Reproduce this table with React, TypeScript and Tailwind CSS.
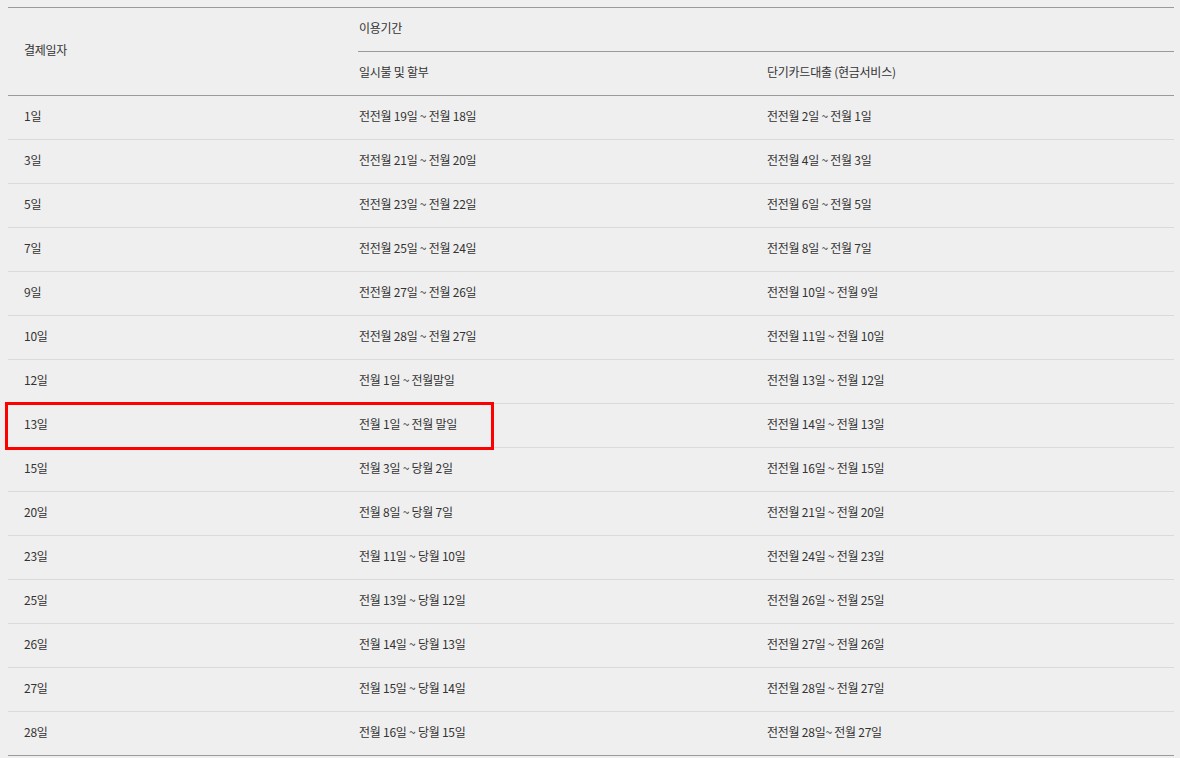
import React from "react";

const rows: [string, string, string][] = [
  ["1일", "전전월 19일 ~ 전월 18일", "전전월 2일 ~ 전월 1일"],
  ["3일", "전전월 21일 ~ 전월 20일", "전전월 4일 ~ 전월 3일"],
  ["5일", "전전월 23일 ~ 전월 22일", "전전월 6일 ~ 전월 5일"],
  ["7일", "전전월 25일 ~ 전월 24일", "전전월 8일 ~ 전월 7일"],
  ["9일", "전전월 27일 ~ 전월 26일", "전전월 10일 ~ 전월 9일"],
  ["10일", "전전월 28일 ~ 전월 27일", "전전월 11일 ~ 전월 10일"],
  ["12일", "전월 1일 ~ 전월말일", "전전월 13일 ~ 전월 12일"],
  ["13일", "전월 1일 ~ 전월 말일", "전전월 14일 ~ 전월 13일"],
  ["15일", "전월 3일 ~ 당월 2일", "전전월 16일 ~ 전월 15일"],
  ["20일", "전월 8일 ~ 당월 7일", "전전월 21일 ~ 전월 20일"],
  ["23일", "전월 11일 ~ 당월 10일", "전전월 24일 ~ 전월 23일"],
  ["25일", "전월 13일 ~ 당월 12일", "전전월 26일 ~ 전월 25일"],
  ["26일", "전월 14일 ~ 당월 13일", "전전월 27일 ~ 전월 26일"],
  ["27일", "전월 15일 ~ 당월 14일", "전전월 28일 ~ 전월 27일"],
  ["28일", "전월 16일 ~ 당월 15일", "전전월 28일~ 전월 27일"],
];

export default function App() {
  return (
    <div
      className="w-[1180px] h-[758px] bg-[#efefef] overflow-hidden text-[12px] text-[#333] tracking-[-0.25px]"
      style={{ fontFamily: '"Noto Sans CJK KR", "Noto Sans", sans-serif' }}
    >
      <div className="relative ml-[8px] mt-[7px] w-[1166px]">
        <table className="w-[1166px] border-collapse table-fixed">
          <colgroup>
            <col className="w-[350px]" />
            <col className="w-[408px]" />
            <col className="w-[408px]" />
          </colgroup>
          <thead>
            <tr className="h-[44px]">
              <th
                rowSpan={2}
                className="border-t border-b border-[#9a9a9a] pl-[16px] pb-[3px] text-left font-normal align-middle"
              >
                결제일자
              </th>
              <th
                colSpan={2}
                className="border-t border-b border-[#9a9a9a] pl-[1px] pb-[3px] text-left font-normal align-middle"
              >
                이용기간
              </th>
            </tr>
            <tr className="h-[44px]">
              <th className="border-b border-[#9a9a9a] pl-[1px] pb-[3px] text-left font-normal align-middle">
                일시불 및 할부
              </th>
              <th className="border-b border-[#9a9a9a] pl-[1px] pb-[3px] text-left font-normal align-middle">
                단기카드대출 (현금서비스)
              </th>
            </tr>
          </thead>
          <tbody>
            {rows.map((r, i) => {
              const last = i === rows.length - 1;
              const b = last ? "border-b border-[#9a9a9a]" : "border-b border-[#dadada]";
              return (
                <tr key={i} className="h-[44px]">
                  <td className={`${b} pl-[16px] pb-[3px] align-middle`}>{r[0]}</td>
                  <td className={`${b} pl-[1px] pb-[3px] align-middle`}>{r[1]}</td>
                  <td className={`${b} pl-[1px] pb-[3px] align-middle`}>{r[2]}</td>
                </tr>
              );
            })}
          </tbody>
        </table>
        <div className="absolute left-[-3px] top-[395px] w-[489px] h-[48px] border-[3px] border-[#ff0000]" />
      </div>
    </div>
  );
}
